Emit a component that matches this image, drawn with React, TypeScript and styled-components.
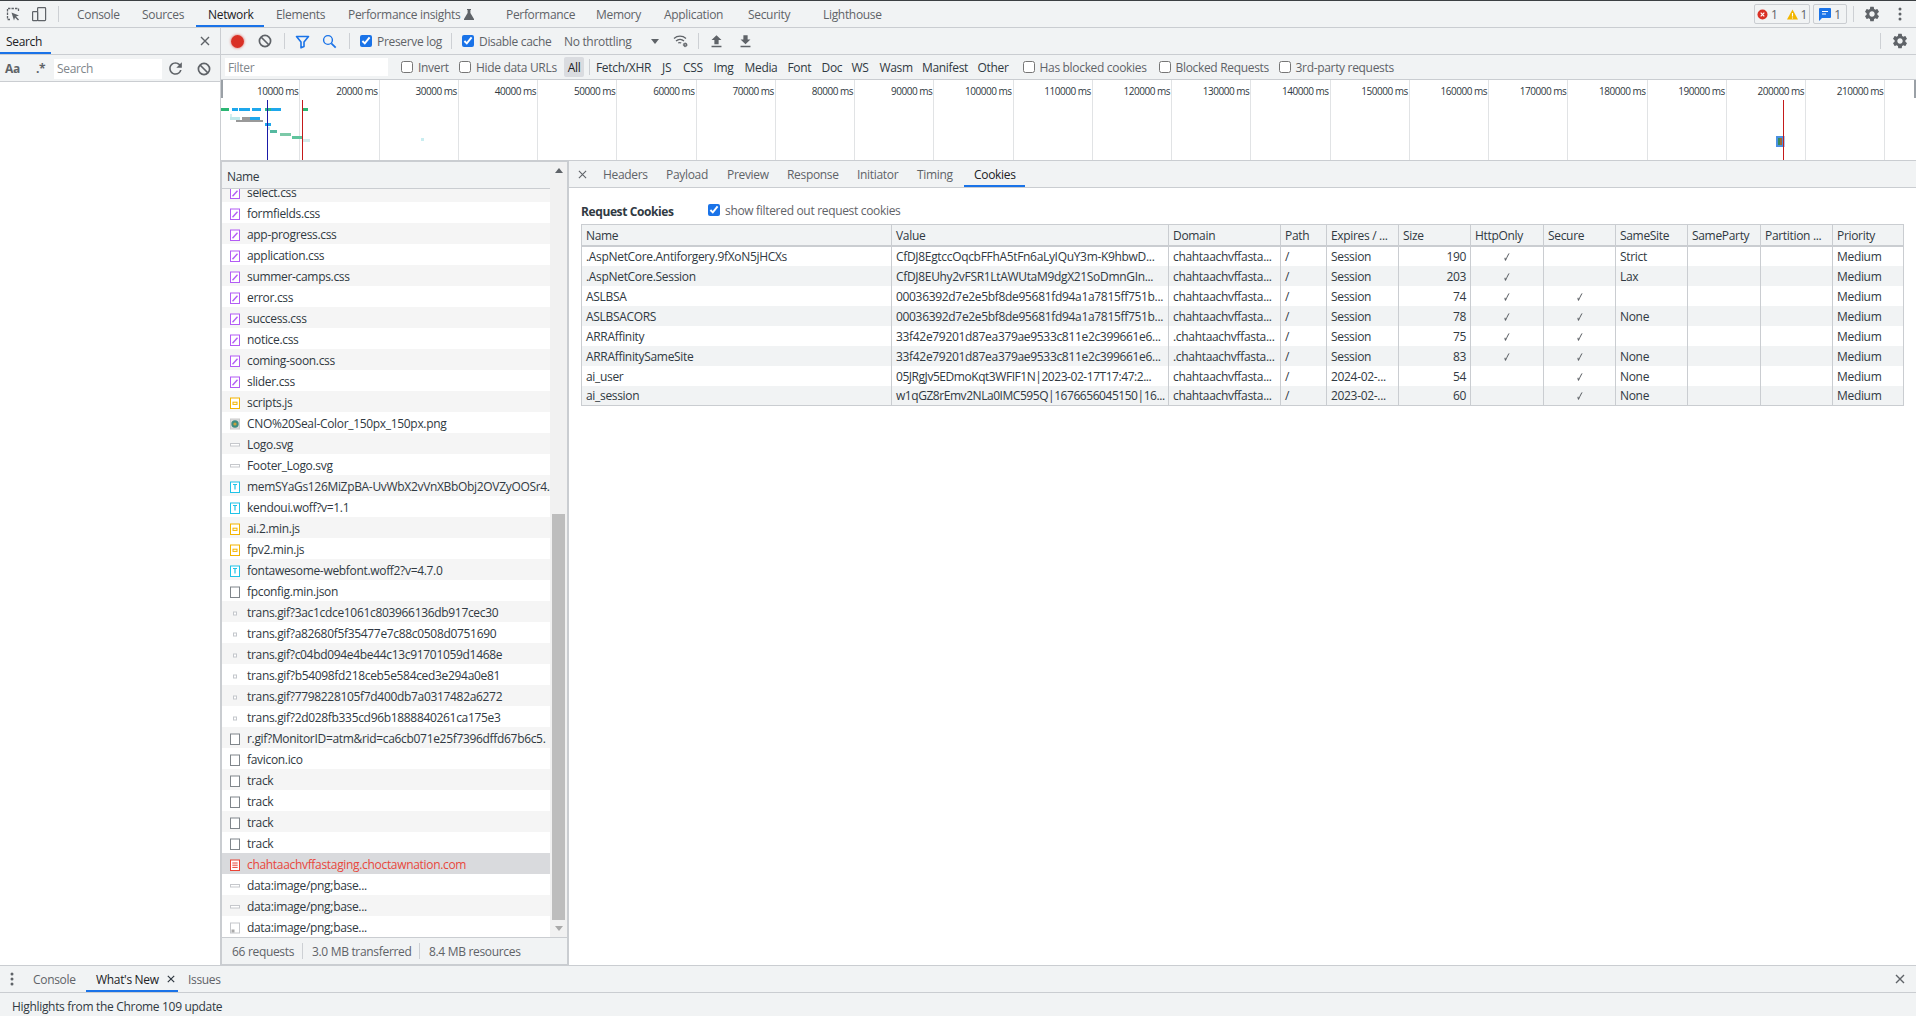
import React from "react";
import styled, { createGlobalStyle } from "styled-components";
import { MdSettings, MdRefresh, MdFileUpload, MdFileDownload } from "react-icons/md";

const Global = createGlobalStyle`
  html, body { margin: 0; padding: 0; height: 100%; background: #fff; overflow: hidden; }
  #root { height: 100%; }
  * { box-sizing: border-box; }
`;

const LINE = "#cacdd1";
const BAR = "#f1f3f4";

const Root = styled.div`
  height: 100vh; display: flex; flex-direction: column; overflow: hidden;
  font-family: "Open Sans", "Noto Sans", sans-serif; font-size: 12px; letter-spacing: -0.32px;
  color: #303942; border-top: 1px solid #3c4043;
`;
const TopBar = styled.div`
  flex: 0 0 27px; display: flex; align-items: stretch; background: ${BAR}; border-bottom: 1px solid ${LINE};
`;
const Slot = styled.div<{ $w?: number; $ml?: number; $c?: string }>`
  flex: 0 0 ${p => p.$w ?? 26}px; margin-left: ${p => p.$ml ?? 0}px; display: flex; align-items: center; justify-content: center;
  color: ${p => p.$c ?? "#5f6368"};
`;
const VSep = styled.div<{ $l?: number; $r?: number }>`
  flex: 0 0 1px; height: 16px; align-self: center; background: #cdd0d4; margin: 0 ${p => p.$r ?? 0}px 0 ${p => p.$l ?? 0}px;
`;
const Tab = styled.div<{ $w: number; $on?: boolean; $pad?: number }>`
  flex: 0 0 ${p => p.$w}px; padding-left: ${p => p.$pad ?? 12}px; display: flex; align-items: center; gap: 4px; white-space: nowrap;
  color: ${p => (p.$on ? "#202124" : "#5f6368")};
  box-shadow: ${p => (p.$on ? "inset 0 -2px 0 #1a73e8" : "none")};
`;
const RightGroup = styled.div`
  margin-left: auto; padding-right: 3px; display: flex; align-items: center;
`;
const Badge = styled.div<{ $w: number; $ml?: number }>`
  flex: 0 0 ${p => p.$w}px; height: 20px; margin-left: ${p => p.$ml ?? 0}px; border: 1px solid ${LINE}; border-radius: 2px;
  display: flex; align-items: center; justify-content: center; gap: 3px; color: #5f6368;
`;
const Body = styled.div`
  flex: 1 1 0; min-height: 0; display: flex;
`;
const Sidebar = styled.aside`
  flex: 0 0 221px; display: flex; flex-direction: column; background: #fff; border-right: 1px solid ${LINE};
`;
const SideTabs = styled.div`
  flex: 0 0 27px; display: flex; align-items: center; justify-content: space-between; background: ${BAR};
  border-bottom: 1px solid ${LINE}; padding: 0 10px 0 0; position: relative;
`;
const SideTab = styled.div`
  width: 51px; height: 26px; padding-left: 6px; display: flex; align-items: center; color: #202124;
  box-shadow: inset 0 -2px 0 #1a73e8;
`;
const SideControls = styled.div`
  flex: 0 0 27px; display: flex; align-items: center; background: ${BAR}; border-bottom: 1px solid ${LINE}; padding-top: 1px;
`;
const AaText = styled.b`
  flex: 0 0 26px; padding-left: 5px; font-size: 12px; color: #5f6368;
`;
const RegexText = styled.span`
  flex: 0 0 28px; padding-left: 10px; font-weight: 700; color: #5f6368;
`;
const SearchBox = styled.div`
  flex: 0 0 108px; height: 20px; background: #fff; padding-left: 3px; display: flex; align-items: center; color: #80868b;
`;
const Network = styled.main`
  flex: 1 1 0; min-width: 0; display: flex; flex-direction: column;
`;
const Toolbar = styled.div`
  flex: 0 0 27px; display: flex; align-items: center; padding-left: 3px; background: ${BAR}; border-bottom: 1px solid ${LINE};
`;
const Record = styled.div`
  width: 13px; height: 13px; border-radius: 50%; background: #d93025; box-shadow: 0 0 2px 1px rgba(217,48,37,.35);
`;
const CheckLabel = styled.label<{ $w: number }>`
  flex: 0 0 ${p => p.$w}px; display: flex; align-items: center; gap: 5px; white-space: nowrap; color: #5f6368;
`;
const Check = styled.input.attrs({ type: "checkbox", readOnly: true })`
  width: 12px; height: 12px; margin: 0; flex: none; accent-color: #1a73e8;
`;
const Plain = styled.span<{ $w: number }>`
  flex: 0 0 ${p => p.$w}px; white-space: nowrap; color: #5f6368;
`;
const FilterBar = styled.div`
  flex: 0 0 25px; display: flex; align-items: center; padding-left: 4px; background: ${BAR}; border-bottom: 1px solid ${LINE};
`;
const FilterInput = styled.div`
  flex: 0 0 163px; height: 18px; margin-right: 13px; padding-left: 3px; background: #fff; color: #80868b; display: flex; align-items: center;
`;
const AllChip = styled.span`
  flex: 0 0 20px; height: 20px; border-radius: 2px; background: #dadce0; display: flex; align-items: center; justify-content: center; color: #202124;
`;
const TypeItem = styled.span<{ $w: number }>`
  flex: 0 0 ${p => p.$w}px; white-space: nowrap; color: #303942;
`;
const Overview = styled.div`
  flex: 0 0 81px; position: relative; display: flex; background: #fff; border-bottom: 1px solid ${LINE}; overflow: hidden;
`;
const Tick = styled.div`
  flex: 0 0 79.25px; height: 80px; padding: 4px 1px 0 0; text-align: right; font-size: 10px; letter-spacing: -0.5px; line-height: 15px; color: #303942;
  border-right: 1px solid #e1e3e5; white-space: nowrap;
`;
const Chart = styled.svg`
  position: absolute; inset: 0; width: 100%; height: 100%;
`;
const ChartBits = styled.g`
  filter: blur(0.45px);
`;
const Split = styled.div`
  flex: 1 1 0; min-height: 0; display: flex;
`;
const ListPane = styled.section`
  flex: 0 0 348px; display: flex; flex-direction: column; border-left: 1px solid ${LINE}; border-right: 2px solid ${LINE};
  border-top: 1px solid ${LINE};
`;
const ListMain = styled.div`
  flex: 1 1 0; min-height: 0; display: flex;
`;
const ListColumn = styled.div`
  flex: 0 0 328px; min-width: 0; display: flex; flex-direction: column;
`;
const NameHead = styled.div`
  flex: 0 0 27px; padding: 2px 0 0 5px; display: flex; align-items: center; background: ${BAR}; border-bottom: 1px solid ${LINE}; color: #303942;
`;
const Viewport = styled.div`
  flex: 1 1 0; min-height: 0; overflow: hidden;
`;
const RowsInner = styled.div`
  margin-top: -8px;
`;
const Row = styled.div<{ $i: number; $sel?: boolean }>`
  height: 21px; padding: 2px 0 0 8px; display: flex; align-items: center; gap: 7px; white-space: nowrap; overflow: hidden;
  background: ${p => (p.$sel ? "#d9dadd" : p.$i % 2 ? "#fff" : "#f5f5f5")};
  color: ${p => (p.$sel ? "#e8473c" : "#303942")};
`;
const IconBox = styled.span`
  flex: 0 0 10px; height: 12px; display: flex;
`;
const Scrollbar = styled.div`
  flex: 0 0 17px; display: flex; flex-direction: column; align-items: center; background: #f1f1f1;
`;
const ArrowBox = styled.div`
  flex: 0 0 17px; display: flex; align-items: center; justify-content: center;
`;
const Spacer = styled.div`
  flex: 1 1 0;
`;
const Thumb = styled.div`
  flex: 0 0 406px; width: 13px; background: #bdbdbd;
`;
const ListFoot = styled.div`
  flex: 0 0 28px; display: flex; align-items: center; padding-left: 10px; background: ${BAR}; color: #5f6368;
  border-top: 1px solid ${LINE}; border-bottom: 1px solid ${LINE};
`;
const FootItem = styled.span<{ $w: number }>`
  flex: 0 0 ${p => p.$w}px; white-space: nowrap;
`;
const Details = styled.section`
  flex: 1 1 0; min-width: 0; display: flex; flex-direction: column; background: #fff;
`;
const DetailTabs = styled.div`
  flex: 0 0 27px; display: flex; align-items: stretch; background: ${BAR}; border-bottom: 1px solid ${LINE}; padding-left: 1px;
`;
const CookieHead = styled.div`
  display: flex; align-items: center; padding: 8px 0 0 12px; height: 36px;
`;
const CookieTitle = styled.b`
  flex: 0 0 127px; font-weight: 700; color: #303942; letter-spacing: -0.4px; padding-top: 2px;
`;
const CookieTable = styled.table`
  margin: 0 0 0 12px; width: 1322px; table-layout: fixed; border-collapse: collapse;
`;
const Th = styled.th`
  height: 21px; padding: 1px 4px 0; font-weight: 400; text-align: left; background: ${BAR}; border: 1px solid ${LINE}; border-bottom-width: 2px;
  color: #303942; white-space: nowrap; overflow: hidden;
`;
const Td = styled.td<{ $a?: string; $tight?: boolean }>`
  height: 20px; padding: 1px 4px 0; border-left: 1px solid ${LINE}; border-right: 1px solid ${LINE}; white-space: nowrap; overflow: hidden;
  text-align: ${p => p.$a ?? "left"}; color: #303942; letter-spacing: ${p => (p.$tight ? "-0.45px" : "inherit")};
`;
const TickMark = styled.span`
  display: inline-block; color: #5f6368; font-weight: 300; transform: scale(0.8, 1.15);
`;
const Tr = styled.tr<{ $i: number }>`
  background: ${p => (p.$i % 2 ? BAR : "#fff")};
  &:last-child td { border-bottom: 1px solid ${LINE}; }
`;
const Drawer = styled.footer`
  flex: 0 0 51px; display: flex; flex-direction: column; background: ${BAR}; border-top: 1px solid ${LINE};
`;
const DrawerTabs = styled.div`
  flex: 0 0 27px; display: flex; align-items: stretch; border-bottom: 1px solid ${LINE};
`;
const DrawerText = styled.div`
  flex: 1 1 0; padding: 4px 0 0 12px; display: flex; align-items: center; color: #303942;
`;
const CloseSpot = styled.div`
  margin-left: auto; width: 32px; display: flex; align-items: center; justify-content: center;
`;

const Inspect = () => (
  <svg width="16" height="16" viewBox="0 0 16 16" fill="none">
    <path d="M5 13.5H2.5v-11h11V5" stroke="#5f6368" strokeWidth="1.3" strokeDasharray="2.4 1.1" />
    <path d="M6.5 6.5l7.5 3-3 1 3 3-1 1-3-3-1 3z" fill="#5f6368" />
  </svg>
);
const Device = () => (
  <svg width="16" height="16" viewBox="0 0 16 16" fill="none" stroke="#5f6368" strokeWidth="1.2">
    <rect x="6.6" y="1.6" width="8" height="13" rx=".8" />
    <rect x="1.6" y="5.6" width="5" height="9" rx=".6" fill="#f1f3f4" />
  </svg>
);
const Flask = () => (
  <svg width="10" height="11" viewBox="0 0 10 11"><path d="M3 0h4v1H6.4v3L10 10v1H0v-1l3.6-6V1H3z" fill="#5f6368" /></svg>
);
const Ban = ({ s = 14 }: { s?: number }) => (
  <svg width={s} height={s} viewBox="0 0 14 14" fill="none" stroke="#5f6368" strokeWidth="1.7">
    <circle cx="7" cy="7" r="5.6" /><path d="M3 3l8 8" />
  </svg>
);
const Funnel = () => (
  <svg width="15" height="15" viewBox="0 0 15 15" fill="none" stroke="#1a73e8" strokeWidth="1.6" strokeLinejoin="round">
    <path d="M1.5 2.5h12L9 8v4.5L6 13.8V8z" />
  </svg>
);
const Lens = () => (
  <svg width="15" height="15" viewBox="0 0 15 15" fill="none" stroke="#1a73e8" strokeWidth="1.4">
    <circle cx="6" cy="6" r="4.4" /><path d="M9.3 9.3l4.4 4.4" strokeWidth="1.7" />
  </svg>
);
const Wifi = () => (
  <svg width="16" height="16" viewBox="0 0 16 16" fill="none" stroke="#5f6368" strokeWidth="1.3">
    <path d="M1 5.5a9 9 0 0 1 12 0M3 8a6 6 0 0 1 8 0" /><path d="M5.2 10a3 3 0 0 1 3 0" />
    <circle cx="12.2" cy="11.8" r="1.9" fill="#5f6368" strokeWidth=".9" strokeDasharray="1 .5" />
    <circle cx="12.2" cy="11.8" r=".6" fill="#f1f3f4" stroke="none" />
  </svg>
);
const Close = ({ s = 10, w = 1.3, c = "#5f6368" }: { s?: number; w?: number; c?: string }) => (
  <svg width={s} height={s} viewBox="0 0 10 10" stroke={c} strokeWidth={w}><path d="M1 1l8 8M9 1l-8 8" /></svg>
);
const Dots = () => (
  <svg width="4" height="14" viewBox="0 0 4 14" fill="#5f6368"><circle cx="2" cy="2" r="1.5" /><circle cx="2" cy="7" r="1.5" /><circle cx="2" cy="12" r="1.5" /></svg>
);
const ErrIcon = () => (
  <svg width="11" height="11" viewBox="0 0 11 11"><circle cx="5.5" cy="5.5" r="5" fill="#d93025" /><path d="M3.7 3.7l3.6 3.6M7.3 3.7L3.7 7.3" stroke="#fff" strokeWidth="1.2" /></svg>
);
const WarnIcon = () => (
  <svg width="11" height="11" viewBox="0 0 11 11"><path d="M5.5 .5L11 10.5H0z" fill="#f2b600" /><path d="M5.5 4v3.6M5.5 8.4v1.1" stroke="#fff" strokeWidth="1.1" /></svg>
);
const MsgIcon = () => (
  <svg width="12" height="13" viewBox="0 0 12 13"><path d="M1 0h10a1 1 0 0 1 1 1v8a1 1 0 0 1-1 1H3l-3 3V1a1 1 0 0 1 1-1z" fill="#1a73e8" /><path d="M3 3.5h6M3 6h4" stroke="#fff" strokeWidth="1.1" /></svg>
);
const Tri = ({ up, c = "#5f6368" }: { up?: boolean; c?: string }) => (
  <svg width="8" height="5" viewBox="0 0 8 5"><path d={up ? "M4 0l4 5H0z" : "M0 0h8L4 5z"} fill={c} /></svg>
);

type Kind = "css" | "js" | "font" | "doc" | "gif" | "png" | "svg" | "html" | "img";
const FileIcon = ({ k }: { k: Kind }) => {
  const box = (c: string) => <rect x=".5" y="1" width="9" height="10.5" fill="#fff" stroke={c} />;
  let inner: React.ReactNode = null;
  if (k === "css") inner = <>{box("#b35cf5")}<path d="M2.5 9.3L7.5 3.7" stroke="#b35cf5" strokeWidth="1.4" /></>;
  if (k === "js") inner = <>{box("#f4b400")}<rect x="3" y="5.2" width="4" height="2.2" fill="none" stroke="#f4b400" /></>;
  if (k === "font") inner = <>{box("#1fc3e8")}<path d="M3 3.5h4M5 3.5v5" stroke="#1fc3e8" strokeWidth="1.2" /></>;
  if (k === "doc") inner = box("#80868b");
  if (k === "gif") inner = <rect x="3.5" y="5" width="3" height="3" fill="#fff" stroke="#c4c7cc" />;
  if (k === "png") inner = <><rect x=".5" y="1" width="9" height="10" fill="#ddd" stroke="#ccc" /><circle cx="5" cy="6" r="3.7" fill="#3d8c80" /><circle cx="5" cy="6" r="1.6" fill="#c9a13b" /></>;
  if (k === "svg") inner = <rect x=".5" y="4.5" width="9" height="2.5" fill="#fff" stroke="#c6c8cc" />;
  if (k === "html") inner = <>{box("#ea4335")}<path d="M2.3 4h5.4M2.3 6.2h5.4M2.3 8.4h5.4" stroke="#ea4335" /></>;
  if (k === "img") inner = <><rect x=".5" y="1" width="9" height="10" fill="#fff" stroke="#c6c8cc" /><rect x="1.5" y="7.5" width="3" height="3" fill="#aaa" /></>;
  return <svg width="10" height="12" viewBox="0 0 10 12">{inner}</svg>;
};

const topTabs: [string, number, boolean?][] = [
  ["Console", 65], ["Sources", 66], ["Network", 68, true], ["Elements", 72], ["Performance insights", 158],
  ["Performance", 90], ["Memory", 68], ["Application", 84], ["Security", 75], ["Lighthouse", 90],
];
const types: [string, number][] = [
  ["Fetch/XHR", 66], ["JS", 21], ["CSS", 30.5], ["Img", 31], ["Media", 43], ["Font", 34], ["Doc", 30], ["WS", 28], ["Wasm", 42.5], ["Manifest", 55.5], ["Other", 45],
];
const ticks = Array.from({ length: 21 }, (_, i) => `${(i + 1) * 10000} ms`);

const rows: [string, Kind][] = [
  ["select.css", "css"], ["formfields.css", "css"], ["app-progress.css", "css"], ["application.css", "css"], ["summer-camps.css", "css"],
  ["error.css", "css"], ["success.css", "css"], ["notice.css", "css"], ["coming-soon.css", "css"], ["slider.css", "css"], ["scripts.js", "js"],
  ["CNO%20Seal-Color_150px_150px.png", "png"], ["Logo.svg", "svg"], ["Footer_Logo.svg", "svg"],
  ["memSYaGs126MiZpBA-UvWbX2vVnXBbObj2OVZyOOSr4.", "font"], ["kendoui.woff?v=1.1", "font"], ["ai.2.min.js", "js"], ["fpv2.min.js", "js"],
  ["fontawesome-webfont.woff2?v=4.7.0", "font"], ["fpconfig.min.json", "doc"],
  ["trans.gif?3ac1cdce1061c803966136db917cec30", "gif"], ["trans.gif?a82680f5f35477e7c88c0508d0751690", "gif"],
  ["trans.gif?c04bd094e4be44c13c91701059d1468e", "gif"], ["trans.gif?b54098fd218ceb5e584ced3e294a0e81", "gif"],
  ["trans.gif?7798228105f7d400db7a0317482a6272", "gif"], ["trans.gif?2d028fb335cd96b1888840261ca175e3", "gif"],
  ["r.gif?MonitorID=atm&rid=ca6cb071e25f7396dffd67b6c5.", "doc"], ["favicon.ico", "doc"], ["track", "doc"], ["track", "doc"], ["track", "doc"], ["track", "doc"],
  ["chahtaachvffastaging.choctawnation.com", "html"], ["data:image/png;base...", "svg"], ["data:image/png;base...", "svg"], ["data:image/png;base...", "img"],
];

const cols: [string, number][] = [
  ["Name", 310], ["Value", 277], ["Domain", 112], ["Path", 46], ["Expires / ...", 72], ["Size", 72], ["HttpOnly", 73],
  ["Secure", 72], ["SameSite", 72], ["SameParty", 73], ["Partition ...", 72], ["Priority", 71],
];
const D = "chahtaachvffasta...";
const cookies: string[][] = [
  [".AspNetCore.Antiforgery.9fXoN5jHCXs", "CfDJ8EgtccOqcbFFhA5tFn6aLyIQuY3m-K9hbwD...", D, "/", "Session", "190", "y", "", "Strict"],
  [".AspNetCore.Session", "CfDJ8EUhy2vFSR1LtAWUtaM9dgX21SoDmnGIn...", D, "/", "Session", "203", "y", "", "Lax"],
  ["ASLBSA", "00036392d7e2e5bf8de95681fd94a1a7815ff751b...", D, "/", "Session", "74", "y", "y", ""],
  ["ASLBSACORS", "00036392d7e2e5bf8de95681fd94a1a7815ff751b...", D, "/", "Session", "78", "y", "y", "None"],
  ["ARRAffinity", "33f42e79201d87ea379ae9533c811e2c399661e6...", "." + D, "/", "Session", "75", "y", "y", ""],
  ["ARRAffinitySameSite", "33f42e79201d87ea379ae9533c811e2c399661e6...", "." + D, "/", "Session", "83", "y", "y", "None"],
  ["ai_user", "05JRgJv5EDmoKqt3WFIF1N|2023-02-17T17:47:2...", D, "/", "2024-02-...", "54", "", "y", "None"],
  ["ai_session", "w1qGZ8rEmv2NLa0IMC595Q|1676656045150|16...", D, "/", "2023-02-...", "60", "", "y", "None"],
];

const bits: [number, number, number, number, string][] = [
  [221, 108, 8, 3, "#2bb673"], [232, 108, 6, 3, "#1ea7ec"], [239, 108, 11, 3, "#1ea7ec"], [252, 108, 9, 3, "#1ea7ec"],
  [265, 108, 6, 3, "#2bb68f"], [271, 108, 10, 3, "#1ea7ec"], [303, 108, 5, 3, "#2bb673"],
  [230, 114, 2, 3, "#d5efee"], [230, 117, 10, 3, "#bfe8ea"], [250, 117, 10, 3, "#1ea7ec"], [242, 117, 8, 3, "#9a9a9a"], [236, 120, 27, 2, "#999"],
  [265, 123, 6, 3, "#1ea7ec"], [267, 127, 3, 3, "#cfeeee"], [270, 130, 7, 3, "#55b9a0"], [280, 133, 11, 3, "#7cc9a8"], [292, 136, 10, 3, "#5fc49d"], [302, 139, 8, 3, "#d5ecec"], [421, 138, 3, 3, "#c9edf0"],
];

export default function App() {
  return (
    <Root>
      <Global />
      <TopBar>
        <Slot><Inspect /></Slot>
        <Slot><Device /></Slot>
        <VSep $l={6} $r={6} />
        {topTabs.map(([t, w, on]) => (
          <Tab key={t} $w={w} $on={on}>{t}{t === "Performance insights" && <Flask />}</Tab>
        ))}
        <RightGroup>
          <Badge $w={56}><ErrIcon />1<Slot $w={3} /><WarnIcon />1</Badge>
          <Badge $w={34} $ml={3}><MsgIcon />1</Badge>
          <VSep $l={6} $r={5} />
          <Slot><MdSettings size={18} /></Slot>
          <Slot $ml={2}><Dots /></Slot>
        </RightGroup>
      </TopBar>
      <Body>
        <Sidebar>
          <SideTabs><SideTab>Search</SideTab><Close s={10} w={1.4} /></SideTabs>
          <SideControls>
            <AaText>Aa</AaText>
            <RegexText>.*</RegexText>
            <SearchBox>Search</SearchBox>
            <Slot $w={26}><MdRefresh size={19} /></Slot>
            <Slot $w={31}><Ban /></Slot>
          </SideControls>
        </Sidebar>
        <Network>
          <Toolbar>
            <Slot><Record /></Slot>
            <Slot $ml={2}><Ban /></Slot>
            <VSep $l={6} $r={4} />
            <Slot><Funnel /></Slot>
            <Slot $ml={1}><Lens /></Slot>
            <VSep $l={7} $r={10} />
            <CheckLabel $w={91}><Check defaultChecked />Preserve log</CheckLabel>
            <VSep $r={10} />
            <CheckLabel $w={102}><Check defaultChecked />Disable cache</CheckLabel>
            <Plain $w={87}>No throttling</Plain>
            <Slot $w={8}><Tri /></Slot>
            <Slot $w={26} $ml={9}><Wifi /></Slot>
            <VSep $l={4} $r={4} />
            <Slot><MdFileUpload size={17} /></Slot>
            <Slot $ml={3}><MdFileDownload size={17} /></Slot>
            <RightGroup>
              <VSep $r={6} />
              <Slot><MdSettings size={18} /></Slot>
            </RightGroup>
          </Toolbar>
          <FilterBar>
            <FilterInput>Filter</FilterInput>
            <CheckLabel $w={58}><Check />Invert</CheckLabel>
            <CheckLabel $w={105}><Check />Hide data URLs</CheckLabel>
            <AllChip>All</AllChip>
            <VSep $l={5} $r={6} />
            {types.map(([t, w]) => <TypeItem key={t} $w={w}>{t}</TypeItem>)}
            <CheckLabel $w={136}><Check />Has blocked cookies</CheckLabel>
            <CheckLabel $w={120}><Check />Blocked Requests</CheckLabel>
            <CheckLabel $w={130}><Check />3rd-party requests</CheckLabel>
          </FilterBar>
          <Overview>
            {ticks.map(t => <Tick key={t}>{t}</Tick>)}
            <Chart viewBox="221 80 1695 80" preserveAspectRatio="none" aria-hidden="true">
              <rect x="221" y="80" width="2" height="18" fill="#9aa0a6" />
              <rect x="1914" y="80" width="2" height="18" fill="#9aa0a6" />
              <ChartBits>
                {bits.map(([x, y, w, h, c], i) => <rect key={i} x={x} y={y} width={w} height={h} fill={c} />)}
              </ChartBits>
              <rect x="267" y="100" width="1" height="60" fill="#1a1aa8" />
              <rect x="302" y="100" width="1" height="60" fill="#c41a1a" />
              <rect x="1776" y="136" width="8.5" height="11" fill="#4a90e2" />
              <rect x="1778" y="138" width="2" height="7" fill="#3a8a5a" />
              <rect x="1780" y="138" width="2" height="7" fill="#a06a3a" />
              <rect x="1783" y="100" width="1" height="60" fill="#c41a1a" />
            </Chart>
          </Overview>
          <Split>
            <ListPane>
              <ListMain>
                <ListColumn>
                  <NameHead>Name</NameHead>
                  <Viewport>
                    <RowsInner>
                      {rows.map(([n, k], i) => (
                        <Row key={i} $i={i} $sel={k === "html"}><IconBox><FileIcon k={k} /></IconBox>{n}</Row>
                      ))}
                    </RowsInner>
                  </Viewport>
                </ListColumn>
                <Scrollbar>
                  <ArrowBox><Tri up /></ArrowBox>
                  <Spacer />
                  <Thumb />
                  <ArrowBox><Tri c="#a9a9a9" /></ArrowBox>
                </Scrollbar>
              </ListMain>
              <ListFoot>
                <FootItem $w={70}>66 requests</FootItem>
                <VSep $r={9} />
                <FootItem $w={107}>3.0 MB transferred</FootItem>
                <VSep $r={9} />
                <FootItem $w={95}>8.4 MB resources</FootItem>
              </ListFoot>
            </ListPane>
            <Details>
              <DetailTabs>
                <Slot $w={22} $ml={1}><Close s={9} w={1.2} /></Slot>
                <Tab $w={63} $pad={10}>Headers</Tab>
                <Tab $w={61} $pad={10}>Payload</Tab>
                <Tab $w={60} $pad={10}>Preview</Tab>
                <Tab $w={70} $pad={10}>Response</Tab>
                <Tab $w={60} $pad={10}>Initiator</Tab>
                <Tab $w={57} $pad={10}>Timing</Tab>
                <Tab $w={61} $pad={10} $on>Cookies</Tab>
              </DetailTabs>
              <CookieHead>
                <CookieTitle>Request Cookies</CookieTitle>
                <CheckLabel $w={200}><Check defaultChecked />show filtered out request cookies</CheckLabel>
              </CookieHead>
              <CookieTable>
                <colgroup>{cols.map(([n, w]) => <col key={n} style={{ width: w }} />)}</colgroup>
                <thead><tr>{cols.map(([n]) => <Th key={n}>{n}</Th>)}</tr></thead>
                <tbody>
                  {cookies.map((c, i) => (
                    <Tr key={c[0]} $i={i}>
                      {c.map((v, j) => (
                        <Td key={j} $tight={v.includes("|")} $a={j === 5 ? "right" : j === 6 || j === 7 ? "center" : "left"}>
                          {v === "y" ? <TickMark>✓</TickMark> : v}
                        </Td>
                      ))}
                      <Td /><Td /><Td>Medium</Td>
                    </Tr>
                  ))}
                </tbody>
              </CookieTable>
            </Details>
          </Split>
        </Network>
      </Body>
      <Drawer>
        <DrawerTabs>
          <Slot $w={24}><Dots /></Slot>
          <Tab $w={62} $pad={9}>Console</Tab>
          <Tab $w={92} $pad={10} $on>What's New<Slot $w={12} $ml={2} $c="#202124"><Close s={8} w={1.5} c="#303942" /></Slot></Tab>
          <Tab $w={50} $pad={10}>Issues</Tab>
          <CloseSpot><Close s={10} w={1.4} /></CloseSpot>
        </DrawerTabs>
        <DrawerText>Highlights from the Chrome 109 update</DrawerText>
      </Drawer>
    </Root>
  );
}
